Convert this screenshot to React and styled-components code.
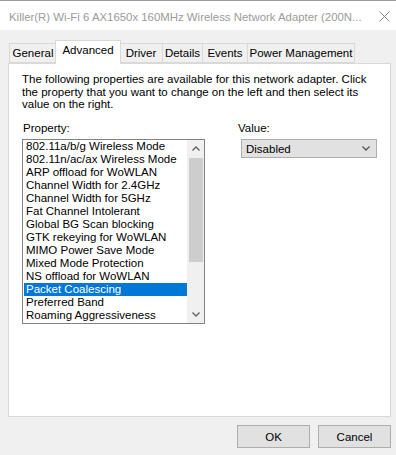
import React from 'react';
import styled, { createGlobalStyle } from 'styled-components';

const GlobalStyle = createGlobalStyle`
  html, body {
    margin: 0;
    padding: 0;
    background: #f0f0f0;
  }
  body {
    font-family: "Liberation Sans", Arial, sans-serif;
    font-size: 11.5px;
    color: #000;
  }
`;

// Window frame
const Window = styled.div`
  width: 396px;
  height: 455px;
  background: #f0f0f0;
  display: flex;
  flex-direction: column;
  overflow: hidden;
`;

const TitleBar = styled.div`
  height: 29px;
  background: #fff;
  border-top: 1px solid #9a9a9a;
  display: flex;
  align-items: center;
  justify-content: space-between;
  padding: 0 5px 0 9px;
  color: #9b9b9b;
  font-size: 11.4px;
`;

const TitleText = styled.span`
  white-space: nowrap;
  padding-top: 2px;
`;

const CloseButton = styled.div`
  width: 14px;
  height: 14px;
  display: flex;
  align-items: center;
  justify-content: center;
  margin-top: 2px;
`;

const Body = styled.div`
  flex: 1;
  display: flex;
  flex-direction: column;
  padding: 10px 5px 7px 8px;
`;

// Tabs
const TabStrip = styled.div`
  display: flex;
  align-items: flex-end;
  height: 23px;
  padding-left: 1px;
`;

const Tab = styled.div`
  width: ${p => p.$w}px;
  height: ${p => (p.$active ? 24 : 20)}px;
  margin-left: ${p => (p.$active ? -2 : -1)}px;
  margin-right: ${p => (p.$active ? -1 : 0)}px;
  margin-bottom: ${p => (p.$active ? -1 : 0)}px;
  background: ${p => (p.$active ? '#fff' : '#f0f0f0')};
  border: 1px solid #d9d9d9;
  border-bottom: ${p => (p.$active ? 'none' : '1px solid #d9d9d9')};
  box-sizing: border-box;
  display: flex;
  align-items: ${p => (p.$active ? 'flex-start' : 'center')};
  padding-top: ${p => (p.$active ? 3 : 0)}px;
  justify-content: center;
  position: relative;
  z-index: ${p => (p.$active ? 1 : 0)};
  white-space: nowrap;
  &:first-child {
    margin-left: 0;
  }
`;

const Panel = styled.div`
  height: 354px;
  background: #fff;
  border: 1px solid #d9d9d9;
  box-sizing: border-box;
  padding: 9px 13px 0 13px;
`;

const Description = styled.p`
  margin: 0 0 11px 0;
  line-height: 12.7px;
`;

const Columns = styled.div`
  display: flex;
  gap: 33px;
`;

const Column = styled.div`
  display: flex;
  flex-direction: column;
  width: ${p => p.$w}px;
`;

const Label = styled.div`
  line-height: 13px;
  height: 13px;
  margin-bottom: 4px;
  margin-left: ${p => p.$indent || 0}px;
`;

// List box
const ListBox = styled.div`
  height: 185px;
  border: 1px solid #828282;
  box-sizing: border-box;
  display: flex;
  background: #fff;
`;

const Items = styled.div`
  flex: 1;
  padding: 0 0 0 1px;
`;

const Item = styled.div`
  height: 13px;
  line-height: 13px;
  padding-left: 2px;
  white-space: nowrap;
  background: ${p => (p.$selected ? '#0078d7' : 'transparent')};
  color: ${p => (p.$selected ? '#fff' : '#000')};
`;

const ScrollBar = styled.div`
  width: 17px;
  background: #f0f0f0;
  display: flex;
  flex-direction: column;
`;

const ScrollArrow = styled.div`
  height: 17px;
  display: flex;
  align-items: center;
  justify-content: center;
`;

const ScrollTrack = styled.div`
  flex: 1;
  display: flex;
  flex-direction: column;
`;

const Thumb = styled.div`
  height: 104px;
  margin: 1px 1px 0 2px;
  background: #cdcdcd;
`;

// Combo box
const Select = styled.div`
  height: 19px;
  margin-left: 3px;
  background: #e1e1e1;
  border: 1px solid #adadad;
  box-sizing: border-box;
  display: flex;
  align-items: center;
  justify-content: space-between;
  padding: 0 6px 0 4px;
`;

// Buttons
const Footer = styled.div`
  display: flex;
  justify-content: flex-end;
  gap: 8px;
  margin-top: 8px;
`;

const Button = styled.div`
  width: 73px;
  height: 23px;
  background: #e1e1e1;
  border: 1px solid #adadad;
  box-sizing: border-box;
  display: flex;
  align-items: center;
  justify-content: center;
`;

const Chevron = ({ up, color = '#606060' }) => (
  <svg width="8" height="5" viewBox="0 0 8 5">
    <polyline
      points={up ? '0.5,4.5 4,1 7.5,4.5' : '0.5,0.5 4,4 7.5,0.5'}
      fill="none"
      stroke={color}
      strokeWidth="1.3"
    />
  </svg>
);

const tabs = [
  { label: 'General', w: 48 },
  { label: 'Advanced', w: 66, active: true },
  { label: 'Driver', w: 44 },
  { label: 'Details', w: 41 },
  { label: 'Events', w: 46 },
  { label: 'Power Management', w: 108 },
];

const properties = [
  '802.11a/b/g Wireless Mode',
  '802.11n/ac/ax Wireless Mode',
  'ARP offload for WoWLAN',
  'Channel Width for 2.4GHz',
  'Channel Width for 5GHz',
  'Fat Channel Intolerant',
  'Global BG Scan blocking',
  'GTK rekeying for WoWLAN',
  'MIMO Power Save Mode',
  'Mixed Mode Protection',
  'NS offload for WoWLAN',
  'Packet Coalescing',
  'Preferred Band',
  'Roaming Aggressiveness',
];

const App = () => {
  return (
    <Window>
      <GlobalStyle />
      <TitleBar>
        <TitleText>Killer(R) Wi-Fi 6 AX1650x 160MHz Wireless Network Adapter (200N...</TitleText>
        <CloseButton>
          <svg width="11" height="11" viewBox="0 0 11 11">
            <path d="M0.5 0.5 L10.5 10.5 M10.5 0.5 L0.5 10.5" stroke="#8a8a8a" strokeWidth="1" />
          </svg>
        </CloseButton>
      </TitleBar>
      <Body>
        <TabStrip>
          {tabs.map(t => (
            <Tab key={t.label} $w={t.w} $active={t.active}>
              {t.label}
            </Tab>
          ))}
        </TabStrip>
        <Panel>
          <Description>
            The following properties are available for this network adapter. Click
            <br />
            the property that you want to change on the left and then select its
            <br />
            value on the right.
          </Description>
          <Columns>
            <Column $w={183}>
              <Label $indent={1}>Property:</Label>
              <ListBox>
                <Items>
                  {properties.map(p => (
                    <Item key={p} $selected={p === 'Packet Coalescing'}>
                      {p}
                    </Item>
                  ))}
                </Items>
                <ScrollBar>
                  <ScrollArrow>
                    <Chevron up />
                  </ScrollArrow>
                  <ScrollTrack>
                    <Thumb />
                  </ScrollTrack>
                  <ScrollArrow>
                    <Chevron />
                  </ScrollArrow>
                </ScrollBar>
              </ListBox>
            </Column>
            <Column $w={139}>
              <Label>Value:</Label>
              <Select>
                <span>Disabled</span>
                <Chevron color="#555" />
              </Select>
            </Column>
          </Columns>
        </Panel>
        <Footer>
          <Button>OK</Button>
          <Button>Cancel</Button>
        </Footer>
      </Body>
    </Window>
  );
};

export default App;
